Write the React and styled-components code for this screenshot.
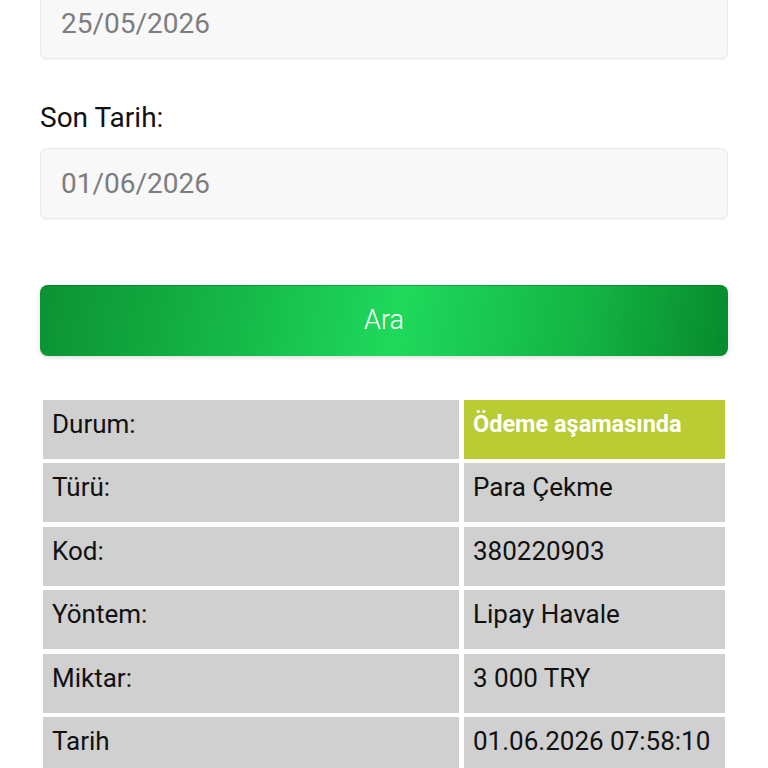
import React from 'react';
import styled, { createGlobalStyle } from 'styled-components';

const rows = [
  { label: 'Türü:', value: 'Para Çekme' },
  { label: 'Kod:', value: '380220903' },
  { label: 'Yöntem:', value: 'Lipay Havale' },
  { label: 'Miktar:', value: '3 000 TRY' },
  { label: 'Tarih', value: '01.06.2026 07:58:10' },
];

function App() {
  return (
    <>
      <GlobalStyle />
      <Page>
        <DateInput $first readOnly value="25/05/2026" />
        <Label>Son Tarih:</Label>
        <DateInput readOnly value="01/06/2026" />
        <SearchButton type="button">Ara</SearchButton>
        <Details>
          <Cell>Durum:</Cell>
          <Cell $status>Ödeme aşamasında</Cell>
          {rows.map((row) => (
            <React.Fragment key={row.label}>
              <Cell>{row.label}</Cell>
              <Cell>{row.value}</Cell>
            </React.Fragment>
          ))}
        </Details>
      </Page>
    </>
  );
}

const GlobalStyle = createGlobalStyle`
  html, body {
    margin: 0;
    padding: 0;
    background: #ffffff;
    height: 768px;
    overflow: hidden;
  }
  body {
    font-family: Roboto, "Noto Sans", "Liberation Sans", sans-serif;
    color: #111;
  }
  * {
    box-sizing: border-box;
  }
`;

const Page = styled.main`
  display: flex;
  flex-direction: column;
  padding: 0 40px;

  & > * {
    flex-shrink: 0;
  }
`;

const DateInput = styled.input`
  display: block;
  width: 100%;
  height: 71px;
  margin-top: ${({ $first }) => ($first ? '-12px' : '0')};
  padding: 0 20px;
  border: 1px solid #e9e9e9;
  border-radius: 7px;
  background: #f8f8f8;
  box-shadow: 0 1px 2px rgba(0, 0, 0, 0.05);
  font-family: Roboto, "Liberation Sans", sans-serif;
  font-size: 28px;
  color: #7d7d7d;
  outline: none;
`;

const Label = styled.label`
  display: block;
  margin: 42px 0 13px;
  font-size: 28px;
  line-height: 1.2;
  color: #111;
`;

const SearchButton = styled.button`
  display: block;
  width: 100%;
  height: 71px;
  margin-top: 66px;
  border: none;
  border-radius: 8px;
  background: linear-gradient(
    100deg,
    #0c9233 0%,
    #15b747 28%,
    #1fd95c 52%,
    #14b545 78%,
    #078a2c 100%
  );
  box-shadow: 0 2px 4px rgba(0, 0, 0, 0.12), inset 0 1px 0 rgba(0, 90, 20, 0.35);
  font-family: Roboto, "Liberation Sans", sans-serif;
  font-size: 27px;
  font-weight: 300;
  color: #ffffff;
  cursor: pointer;
`;

const Details = styled.section`
  display: grid;
  grid-template-columns: 416px 1fr;
  gap: 4.5px 5px;
  margin: 44px 3px 0;
`;

const Cell = styled.div`
  height: 59px;
  padding: 9px 9px 0;
  background: ${({ $status }) => ($status ? '#b9cc33' : '#d0d0d0')};
  color: ${({ $status }) => ($status ? '#ffffff' : '#111111')};
  font-size: ${({ $status }) => ($status ? '23.5px' : '26px')};
  font-weight: ${({ $status }) => ($status ? 700 : 400)};
  line-height: ${({ $status }) => ($status ? '31px' : '1.2')};
  white-space: nowrap;
`;

export default App;
